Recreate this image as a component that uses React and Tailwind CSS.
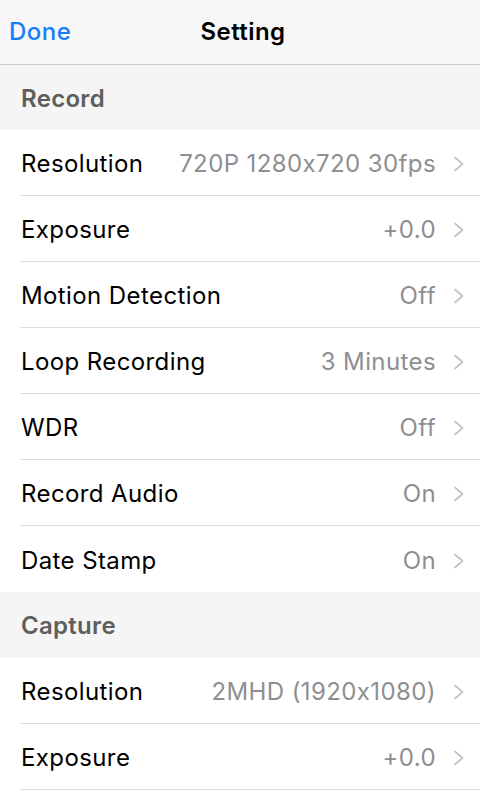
import React from 'react';

const FONT = { fontFamily: 'Inter, "Liberation Sans", sans-serif' };

const sections = [
    {
        title: 'Record',
        rows: [
            { label: 'Resolution', value: '720P 1280x720 30fps' },
            { label: 'Exposure', value: '+0.0' },
            { label: 'Motion Detection', value: 'Off' },
            { label: 'Loop Recording', value: '3 Minutes' },
            { label: 'WDR', value: 'Off' },
            { label: 'Record Audio', value: 'On' },
            { label: 'Date Stamp', value: 'On' },
        ],
    },
    {
        title: 'Capture',
        rows: [
            { label: 'Resolution', value: '2MHD (1920x1080)' },
            { label: 'Exposure', value: '+0.0' },
        ],
    },
];

const Chevron = () => (
    <svg width="12" height="16" viewBox="0 0 12 16" fill="none" className="shrink-0">
        <polyline points="2,1.5 9.5,8 2,14.5" stroke="#c4c4c8" strokeWidth="1.8" strokeLinecap="round" strokeLinejoin="round" />
    </svg>
);

const SettingRow = ({ label, value, last }) => (
    <div className="h-[66px] pl-[20px] bg-white">
        <div className={`h-full flex items-center pr-[15px] pt-[3px] ${last ? '' : 'border-b border-[#dcdcdf]'}`}>
            <span className="flex-1 text-[24px] text-black pl-[1px] tracking-[0.4px]">{label}</span>
            <span className="text-[24px] text-[#8e8e93] mr-[17px] tracking-[0.4px]">{value}</span>
            <Chevron />
        </div>
    </div>
);

export default function App() {
    return (
        <div className="w-[480px] h-[800px] overflow-hidden bg-white" style={FONT}>
            {/* Nav bar */}
            <div className="h-[65px] bg-[#f7f7f7] border-b border-[#c8c8cc] flex items-center relative">
                <span className="pl-[9px] text-[24px] font-medium text-[#157efb] tracking-[0.5px]">Done</span>
                <span className="absolute left-0 right-0 text-center text-[24px] font-semibold text-black tracking-[0.4px] pl-[6px]">
                    Setting
                </span>
            </div>

            {sections.map((section, i) => (
                <div key={section.title}>
                    <div className={`${i === 0 ? 'h-[65px]' : 'h-[66px]'} bg-[#f5f5f5] flex items-center pl-[21px] pt-[2px]`}>
                        <span className="text-[24px] font-semibold text-[#5e5e5e] tracking-[0.3px]">{section.title}</span>
                    </div>
                    {section.rows.map((row, j) => (
                        <SettingRow key={row.label + j} {...row} last={j === section.rows.length - 1 && i === 0} />
                    ))}
                </div>
            ))}
        </div>
    );
}
